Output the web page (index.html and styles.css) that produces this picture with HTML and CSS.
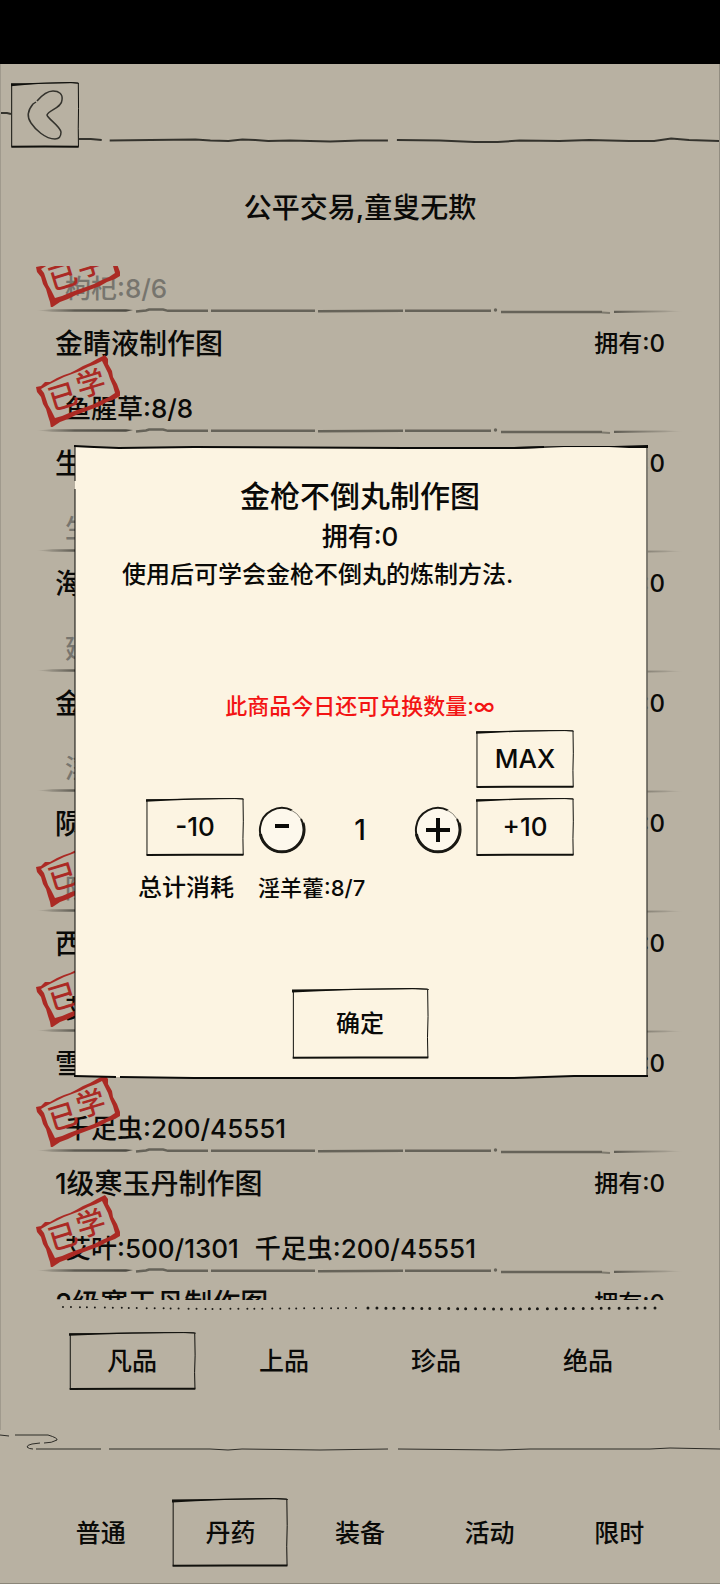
FILE: index.html
```html
<!DOCTYPE html>
<html lang="zh-CN">
<head>
<meta charset="utf-8">
<meta name="viewport" content="width=device-width, initial-scale=1">
<title>公平交易,童叟无欺</title>
<link rel="stylesheet" href="styles.css">
</head>
<body>
<svg class="defs" aria-hidden="true">
  <symbol id="frame" viewBox="0 0 100 100" preserveAspectRatio="none">
    <path d="M0 2 L22 2.2 L50 1 L88 0 L100 1.5 L100 2.6 L88 1.4 L50 2.4 L20 4.6 L0 6.5Z" fill="currentColor"/>
    <path class="ink thin" d="M1 4 L1 98"/>
    <path class="ink thin" d="M99 2 L99.3 40 L98.9 70 L99.2 98"/>
    <path class="ink bold" d="M0.5 98.2 L50 97.8 L99.5 98"/>
    <path class="ink thin" d="M0.5 3.5 L40 2 L90 1 L99 1.5"/>
  </symbol>
  <symbol id="rule" viewBox="36 0 648 8" preserveAspectRatio="none">
    <linearGradient id="fadeIn"><stop offset="0" stop-color="#5f5c53" stop-opacity="0"/><stop offset=".4" stop-color="#5f5c53"/><stop offset="1" stop-color="#4c4a42"/></linearGradient>
    <linearGradient id="fadeOut"><stop offset="0" stop-color="#5f5c53"/><stop offset="1" stop-color="#5f5c53" stop-opacity="0"/></linearGradient>
    <path d="M36 3.5 L52 2.2 L126 2.2 L133 3 L126 4.8 L52 4.8Z" fill="url(#fadeIn)"/>
    <path d="M136 4.500 L146 3.500 L149 2.500 L163 2.500 L168 3.800 L208 3.800 M211 3.700 L315 3.700 M318 4.200 L403 3.700 M405 3.700 L491 3.700 M501 5 L602 5" fill="none" stroke="#666359" stroke-width="2.400"/>
    <path d="M602 5.500 L610 6" stroke="#7e7a6e" stroke-width="2"/>
    <circle cx="495.500" cy="3" r="1.700" fill="#666359"/>
    <path d="M614 3.800 L665 3.400 L684 4.200 L665 5.200 L614 6Z" fill="url(#fadeOut)"/>
  </symbol>
  <symbol id="stamp" viewBox="0 0 84 72">
    <path fill-rule="evenodd" fill="currentColor" d="M0 32 L5 31 L9 27 L14 27 L21 23 L28 20 L34 18 L40 15 L47 11 L54 8 L61 4 L69 0 L72 4 L72 9 L76 16 L77 22 L81 29 L84 37 L84 41 L79 44 L71 47 L64 51 L56 54 L48 57 L40 60 L32 64 L24 67 L15 73 L14 67 L12 61 L10 54 L7 49 L5 42 L1 37Z M5 34 L8 38 L10 44 L12 50 L15 55 L19 63 L26 61 L33 58 L41 55 L50 52 L58 49 L66 45 L73 42 L79 38 L77 31 L74 24 L72 18 L69 12 L66 6 L60 9 L52 12 L44 16 L36 19 L28 22 L20 26 L12 30Z"/>
    <g class="stamp-text" fill="currentColor">
      <text transform="translate(27 42) rotate(-17)" y="10">已</text>
      <text transform="translate(55 29) rotate(-17)" y="10">学</text>
    </g>
  </symbol>
  <symbol id="ring" viewBox="0 0 48 48">
    <circle class="disc" cx="24" cy="24" r="22"/>
    <path class="ring" d="M34 4.400 A22 22 0 1 0 43 13"/>
    <path class="ring faint" d="M33 4 A22 22 0 0 1 43 13"/>
    <path class="ring heavy" d="M2.400 28 A22 22 0 0 0 45.600 28 A22 22 0 0 0 45 17"/>
  </symbol>
</svg>

<div class="app">
  <div class="status"></div>
  <main class="shop">
    <header class="head">
      <svg class="head-line" viewBox="0 0 720 90" preserveAspectRatio="none" aria-hidden="true">
        <path d="M0 49 L6 49 L10 50 M78 75 L90 75 L101 76 M109 76.500 L150 76 L195 75.500 L210 76.500 L228 77 L242 75.500 L255 76 L268 77 L290 76.500 L330 77.500 L360 76.500 L388 76.500 M397 76 L440 76.500 L475 78 L498 78 L520 76.500 L560 77 L590 76 L630 77 L655 77 L672 74.500 L690 76 L720 77"/>
      </svg>
      <button class="back framed" aria-label="返回">
        <svg class="frame"><use href="#frame"/></svg>
        <svg class="back-icon" viewBox="0 0 36 50" aria-hidden="true"><path d="M10 11 C16 4 21 1 26 1 C32 1 36 4 35 10 C35 18 21 20 20 25 C21 29 33 36 34 42 C34 47 32 49 28 49 C18 49 8 39 4 33 C-1 26 1 20 6 14 L9 12"/></svg>
      </button>
    </header>
    <h1 class="slogan">公平交易,童叟无欺</h1>

    <section class="list">
      <ul class="rows">
        <li class="row"><p class="cost short">枸杞:8/6</p><svg class="stamp"><use href="#stamp"/></svg><svg class="rule"><use href="#rule"/></svg></li>
        <li class="row"><h2 class="name">金睛液制作图</h2><span class="own">拥有:0</span><p class="cost">鱼腥草:8/8</p><svg class="stamp"><use href="#stamp"/></svg><svg class="rule"><use href="#rule"/></svg></li>
        <li class="row"><h2 class="name">生</h2><span class="own">拥有:0</span><p class="cost short">生</p><svg class="rule"><use href="#rule"/></svg></li>
        <li class="row"><h2 class="name">海</h2><span class="own">拥有:0</span><p class="cost short">延</p><svg class="rule"><use href="#rule"/></svg></li>
        <li class="row"><h2 class="name">金</h2><span class="own">拥有:0</span><p class="cost short">淫</p><svg class="rule"><use href="#rule"/></svg></li>
        <li class="row"><h2 class="name">陨</h2><span class="own">拥有:0</span><p class="cost short">陨</p><svg class="stamp"><use href="#stamp"/></svg><svg class="rule"><use href="#rule"/></svg></li>
        <li class="row"><h2 class="name">西</h2><span class="own">拥有:0</span><p class="cost">艾</p><svg class="stamp"><use href="#stamp"/></svg><svg class="rule"><use href="#rule"/></svg></li>
        <li class="row"><h2 class="name">雪</h2><span class="own">拥有:0</span><p class="cost">千足虫:200/45551</p><svg class="stamp"><use href="#stamp"/></svg><svg class="rule"><use href="#rule"/></svg></li>
        <li class="row"><h2 class="name">1级寒玉丹制作图</h2><span class="own">拥有:0</span><p class="cost"><span>艾叶:500/1301</span><span>千足虫:200/45551</span></p><svg class="stamp"><use href="#stamp"/></svg><svg class="rule"><use href="#rule"/></svg></li>
        <li class="row"><h2 class="name">2级寒玉丹制作图</h2><span class="own">拥有:0</span></li>
      </ul>
    </section>

    <svg class="dots" viewBox="0 0 600 8" preserveAspectRatio="none" aria-hidden="true">
      <path class="dots-fine" d="M2 3 L150 5 L300 4"/>
      <path class="dots-bold" d="M308 4 L450 5 L596 4"/>
    </svg>

    <nav class="tiers" aria-label="品级">
      <button class="tab framed"><svg class="frame"><use href="#frame"/></svg>凡品</button>
      <button class="tab">上品</button>
      <button class="tab">珍品</button>
      <button class="tab">绝品</button>
    </nav>
  </main>

  <footer class="foot">
    <svg class="foot-line" viewBox="0 0 720 30" preserveAspectRatio="none" aria-hidden="true">
      <path d="M0 5 L9 6 M15 5 L48 5 Q58 8 57 10 Q52 13 44 13 M40 13 L32 14 Q27 15 27 17 Q29 19 33 19 M36 19 L101 19 M109 19 L210 19 L228 20 L242 19 L320 20 L388 19 M398 19 L500 20 L530 19 L650 19 L670 18 L720 19"/>
    </svg>
    <nav class="kinds" aria-label="分类">
      <button class="tab">普通</button>
      <button class="tab framed"><svg class="frame"><use href="#frame"/></svg>丹药</button>
      <button class="tab">装备</button>
      <button class="tab">活动</button>
      <button class="tab">限时</button>
    </nav>
  </footer>

  <div class="overlay">
    <section class="dialog" role="dialog" aria-modal="true" aria-labelledby="item">
      <svg class="dialog-frame" viewBox="0 0 574 634" preserveAspectRatio="none" aria-hidden="true">
        <path class="paper" d="M1 2 L36 3 L574 2 L573 632 L1 632Z"/>
        <path class="ink thin" d="M1 0 L1 36 M1 44 L1 632 M573 2 L573 632"/>
        <path class="ink" d="M0 1 L20 2 L45 3 L120 2 L330 3 L440 3 L470 2 M0 631 L42 632 M46 632 L120 633 L440 633 L500 631 L574 631"/>
        <path fill="currentColor" d="M440 2 L490 1 L540 1 L574 0 L574 3 L555 3 L535 2 L490 2 L440 4Z"/>
      </svg>
      <h2 class="item" id="item">金枪不倒丸制作图</h2>
      <p class="item-own">拥有:0</p>
      <p class="desc">使用后可学会金枪不倒丸的炼制方法.</p>
      <p class="limit">此商品今日还可兑换数量:∞</p>
      <div class="amount">
        <button class="step max framed"><svg class="frame"><use href="#frame"/></svg>MAX</button>
        <button class="step framed"><svg class="frame"><use href="#frame"/></svg>-10</button>
        <button class="round" aria-label="减一">
          <svg viewBox="0 0 48 48"><use href="#ring"/><path class="sign" d="M17 20 H31"/></svg>
        </button>
        <output class="count">1</output>
        <button class="round" aria-label="加一">
          <svg viewBox="0 0 48 48"><use href="#ring"/><path class="sign" d="M12 24 H36 M24 12 V36"/></svg>
        </button>
        <button class="step framed"><svg class="frame"><use href="#frame"/></svg>+10</button>
      </div>
      <div class="total"><span>总计消耗</span><span class="price">淫羊藿:8/7</span></div>
      <button class="confirm framed"><svg class="frame"><use href="#frame"/></svg>确定</button>
    </section>
  </div>
</div>
</body>
</html>
```

FILE: styles.css
```css
* { box-sizing: border-box; }

body, h1, h2, p, ul { margin: 0; padding: 0; }

body {
  background: #b8b1a2;
  color: #0a0a08;
  font-family: Inter, "Noto Sans CJK SC", sans-serif;
  font-size: 24px;
  font-weight: 500;
  line-height: 36px;
}

h1, h2 { font-weight: 500; }

button {
  padding: 0;
  border: 0;
  background: none;
  color: inherit;
  font: inherit;
}

.defs { position: absolute; width: 0; height: 0; }

.app {
  position: relative;
  display: flex;
  flex-direction: column;
  min-height: 100vh;
  border-bottom: 1px solid #8b8679;
}

.status { height: 64px; background: #000; }

.shop {
  display: flex;
  flex-direction: column;
  border-left: 1px solid #a09a8d;
  border-right: 1px solid #928d81;
}

/* Hand-drawn frames */
.framed { position: relative; }
.frame { position: absolute; inset: 0; width: 100%; height: 100%; color: #11110d; }
.ink { fill: none; stroke: currentColor; stroke-width: 2px; vector-effect: non-scaling-stroke; }
.thin { stroke-width: 1px; }
.bold { stroke-width: 2px; }

/* Header */
.head { position: relative; height: 90px; padding: 18px 10px; }
.head-line { position: absolute; left: 0; top: 0; width: 100%; height: 90px; }
.head-line path { fill: none; stroke: #34332d; stroke-width: 2px; }
.back { display: grid; place-items: center; width: 68px; height: 66px; background: #b8b1a2; }
.back-icon { width: 36px; height: 50px; overflow: visible; }
.back-icon path { fill: none; stroke: #34332d; stroke-width: 1.5px; }

.slogan {
  padding: 34px 0 38px;
  font-size: 28px;
  line-height: 40px;
  text-align: center;
}

/* Goods list */
.list { height: 1034px; overflow: hidden; padding: 0 35px; }
.rows { margin-top: -72px; list-style: none; }
.row {
  position: relative;
  display: grid;
  grid-template-columns: 1fr auto;
  grid-template-rows: 60px 60px;
  align-items: center;
  height: 120px;
  padding: 0 19px;
}
.name { font-size: 28px; line-height: 40px; }
.own { font-size: 24px; }
.cost { display: flex; gap: 16px; grid-row: 2; grid-column: 1 / 3; padding: 10px 10px 0; font-size: 26px; }
.short { color: #77756e; }
.stamp { position: absolute; left: 0; top: 41px; width: 84px; height: 72px; color: #ab2a24; overflow: visible; }
.stamp-text { font: 500 29px "Noto Sans CJK SC", sans-serif; text-anchor: middle; }
.rule { position: absolute; left: 0; bottom: -1px; width: 100%; height: 8px; }

.dots { height: 8px; margin: 4px 60px 0; }
.dots path { fill: none; stroke: #1a1915; stroke-linecap: round; }
.dots-fine { stroke-width: 2px; stroke-dasharray: 0 8 0 9 0 7 0 8 0 10; }
.dots-bold { stroke-width: 3px; stroke-dasharray: 0 9 0 9 0 8 0 10; }

.tiers, .kinds { display: grid; justify-items: center; align-items: center; font-size: 25px; }
.tiers { grid-template-columns: repeat(4, 1fr); padding: 20px 55px 40px; }
.tiers .tab { width: 127px; height: 58px; }

.foot { padding-bottom: 15px; }
.foot-line { display: block; width: 100%; height: 30px; }
.foot-line path { fill: none; stroke: #2d2c27; stroke-width: 1px; }
.kinds { grid-template-columns: repeat(5, 1fr); padding: 38px 36px 0; }
.kinds .tab { width: 116px; height: 69px; }

/* Exchange dialog */
.overlay {
  position: absolute;
  inset: 0;
  display: grid;
  justify-items: center;
  align-content: start;
  padding: 445px 72px 0 74px;
}
.dialog {
  position: relative;
  display: flex;
  flex-direction: column;
  align-items: center;
  width: 100%;
  padding: 30px 50px 20px 48px;
}
.dialog-frame { position: absolute; inset: 0; width: 100%; height: 100%; }
.paper { fill: #fcf4e2; }
.dialog > :not(.dialog-frame) { position: relative; }
.item { font-size: 30px; line-height: 42px; }
.item-own { padding-top: 2px; font-size: 26px; }
.desc { align-self: stretch; min-height: 112px; padding-top: 2px; }
.limit { margin-top: 23px; color: #f31414; font-size: 22px; line-height: 32px; }
.amount {
  display: grid;
  grid-template-columns: 98px 48px 1fr 48px 98px;
  column-gap: 14px;
  row-gap: 10px;
  align-items: center;
  width: 428px;
  margin: 8px 0 14px;
}
.step { height: 58px; font-size: 26px; }
.max { grid-column: 5; }
.round, .round svg { display: block; width: 48px; height: 48px; }
.round { margin-top: 6px; }
.disc { fill: #fdf8ec; }
.ring { fill: none; stroke: #191813; stroke-width: 2px; }
.faint { stroke: #8a867a; stroke-width: 1px; }
.heavy { stroke-width: 3px; }
.sign { fill: none; stroke: #0a0a08; stroke-width: 4px; }
.count { margin-top: 6px; font-size: 28px; text-align: center; }
.total { display: flex; align-self: flex-start; align-items: center; gap: 24px; padding-left: 16px; }
.price { font-size: 22px; }
.confirm { width: 137px; height: 71px; margin-top: 82px; }
```
